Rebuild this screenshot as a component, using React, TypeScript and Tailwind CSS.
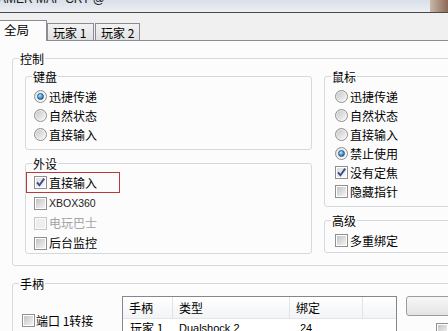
import type { ReactNode } from "react";

function Radio({ checked = false }: { checked?: boolean }) {
  return (
    <span className="flex h-[13px] w-[13px] shrink-0 items-center justify-center rounded-full border border-[#8f8f8f] bg-linear-to-br from-[#e2e2e2] to-[#fdfdfd]">
      {checked ? (
        <span className="h-[7px] w-[7px] rounded-full border border-[#1d5a8a] bg-[radial-gradient(circle_at_35%_30%,#c4e9fc,#3a93cf_55%,#14507f)]" />
      ) : (
        <span className="h-[9px] w-[9px] rounded-full bg-linear-to-br from-[#c8c8c8] to-[#f6f6f6]" />
      )}
    </span>
  );
}

function Check({ checked = false, disabled = false }: { checked?: boolean; disabled?: boolean }) {
  return (
    <span
      className={
        disabled
          ? "flex h-[13px] w-[13px] shrink-0 items-center justify-center border border-[#c6c6c6] bg-[#fafafa]"
          : "flex h-[13px] w-[13px] shrink-0 items-center justify-center border border-[#8f8f8f] bg-white"
      }
    >
      <span
        className={
          disabled
            ? "relative h-[9px] w-[9px] bg-[#eeeeee]"
            : checked
              ? "relative h-[9px] w-[9px] bg-linear-to-br from-[#dcdcdc] to-[#fafafa]"
              : "relative h-[9px] w-[9px] bg-linear-to-br from-[#c4c4c4] to-[#f4f4f4]"
        }
      >
        {checked && (
          <svg className="absolute left-[-1px] top-[-1px]" width="11" height="11" viewBox="0 0 11 11">
            <path d="M2 5.3 4.4 8.3 9.2 1.6" fill="none" stroke="#3b4c8e" strokeWidth="1.9" />
          </svg>
        )}
      </span>
    </span>
  );
}

function Item({ control, children, muted = false }: { control: ReactNode; children: ReactNode; muted?: boolean }) {
  return (
    <div className="flex h-[19px] items-center gap-[2px]">
      {control}
      <span className={muted ? "leading-[14px] text-[#a3a3a3]" : "leading-[14px]"}>{children}</span>
    </div>
  );
}

function Group({ title, className, children }: { title: string; className: string; children?: ReactNode }) {
  return (
    <div className={`relative rounded-[3px] border border-[#d5d9dd] ${className}`}>
      <span className="absolute left-[6px] top-[-7px] bg-[#fcfcfc] px-[1px] leading-[14px]">{title}</span>
      {children}
    </div>
  );
}

export default function App() {
  return (
    <div className="h-[331px] w-[448px] overflow-hidden bg-[#f0f0f0] font-['Noto_Sans_CJK_SC',sans-serif] text-[12px] text-black">
      {/* window caption, mostly scrolled off */}
      <div className="flex h-[13px] border-b border-[#4a4a4a] bg-linear-to-b from-[#d9dfe7] to-[#eceff3]">
        <div className="-ml-[2px] -mt-[8px] flex-1 font-['Liberation_Sans',sans-serif] text-[12px] leading-[14px] text-[#1a1a1a]">
          AMER MAP CRT @
        </div>
        <div className="w-[18px] bg-linear-to-r from-[#c9b8a8] to-[#8a6a55]" />
      </div>

      {/* tabs */}
      <div className="flex h-[27px] items-end">
        <div className="relative z-10 -mb-[1px] h-[21px] w-[47px] border-r border-t border-[#898c95] bg-[#fcfcfc] pl-[4px] pt-[2px] text-[12.5px] leading-[14px]">
          全局
        </div>
        <div className="h-[17px] w-[47px] border border-b-0 border-[#898c95] bg-linear-to-b from-[#f3f3f3] to-[#e1e1e1] pl-[5px] pt-[2px] leading-[14px]">
          玩家 1
        </div>
        <div className="ml-[1px] h-[17px] w-[45px] border border-b-0 border-[#898c95] bg-linear-to-b from-[#f3f3f3] to-[#e1e1e1] pl-[5px] pt-[2px] leading-[14px]">
          玩家 2
        </div>
      </div>

      {/* tab page */}
      <div className="h-[400px] border-t border-[#898c95] bg-[#fcfcfc] pl-[12px] pt-[17px]">
        <Group title="控制" className="w-[520px] pb-[11px] pl-[12px] pt-[17px]">
          <div className="flex gap-[12px]">
            <div className="flex w-[287px] flex-col gap-[13px]">
              <Group title="键盘" className="pb-[5px] pl-[8px] pt-[10px]">
                <Item control={<Radio checked />}>迅捷传递</Item>
                <Item control={<Radio />}>自然状态</Item>
                <Item control={<Radio />}>直接输入</Item>
              </Group>
              <Group title="外设" className="pt-[8px]">
                <div className="flex h-[21px] w-[94px] items-center gap-[2px] border border-[#b83a3a] pl-[7px]">
                  <Check checked />
                  <span className="leading-[14px]">直接输入</span>
                </div>
                <div className="flex h-[20px] items-center gap-[2px] pl-[8px]">
                  <Check />
                  <span className="font-['Liberation_Sans',sans-serif] text-[10.5px] leading-[14px] text-[#222]">XBOX360</span>
                </div>
                <div className="flex h-[20px] items-center gap-[2px] pl-[8px]">
                  <Check disabled />
                  <span className="leading-[14px] text-[#a3a3a3]">电玩巴士</span>
                </div>
                <div className="flex h-[20px] items-center gap-[2px] pl-[8px]">
                  <Check />
                  <span className="leading-[14px]">后台监控</span>
                </div>
              </Group>
            </div>
            <div className="flex w-[200px] flex-col gap-[13px]">
              <Group title="鼠标" className="pb-[5px] pl-[10px] pt-[10px]">
                <Item control={<Radio />}>迅捷传递</Item>
                <Item control={<Radio />}>自然状态</Item>
                <Item control={<Radio />}>直接输入</Item>
                <Item control={<Radio checked />}>禁止使用</Item>
                <Item control={<Check checked />}>没有定焦</Item>
                <Item control={<Check />}>隐藏指针</Item>
              </Group>
              <Group title="高级" className="pb-[2px] pl-[10px] pt-[10px]">
                <Item control={<Check />}>多重绑定</Item>
              </Group>
            </div>
          </div>
        </Group>

        <Group title="手柄" className="mt-[17px] h-[200px] w-[520px] pl-[9px] pt-[12px]">
          <div className="flex items-start">
            <div className="w-[100px] pt-[15px]">
              <div className="flex h-[19px] items-center gap-[1px]">
                <Check />
                <span className="leading-[14px]">端口 1转接</span>
              </div>
            </div>
            <div className="h-[80px] w-[275px] border border-[#828790] bg-white">
              <div className="flex h-[22px] border-b border-[#e5e5e5] bg-linear-to-b from-[#ffffff] to-[#f3f4f6] leading-[14px]">
                <div className="flex w-[50px] items-center border-r border-[#e0e3e8] pl-[6px]">手柄</div>
                <div className="flex w-[117px] items-center border-r border-[#e0e3e8] pl-[6px]">类型</div>
                <div className="flex w-[73px] items-center border-r border-[#e0e3e8] pl-[6px]">绑定</div>
                <div className="flex-1" />
              </div>
              <div className="flex h-[18px] items-center leading-[14px]">
                <div className="w-[50px] pl-[7px]">玩家 1</div>
                <div className="w-[117px] pl-[6px] font-['Liberation_Sans',sans-serif] text-[11px]">Dualshock 2</div>
                <div className="w-[73px] pl-[10px] font-['Liberation_Sans',sans-serif] text-[11px]">24</div>
              </div>
            </div>
            <div className="ml-[9px] flex flex-col">
              <div className="h-[20px] w-[60px] rounded-[3px] border border-[#9c9c9c] bg-linear-to-b from-[#f7f7f7] to-[#e4e4e4]" />
              <div className="ml-[30px] mt-[7px]">
                <Check />
              </div>
            </div>
          </div>
        </Group>
      </div>
    </div>
  );
}
